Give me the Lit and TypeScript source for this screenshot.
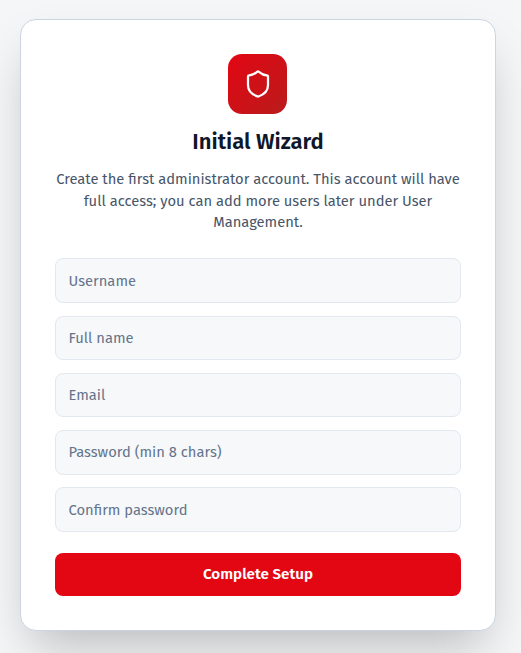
import { LitElement, html, css } from "lit";
import { customElement } from "lit/decorators.js";

@customElement("app-root")
export class AppRoot extends LitElement {
  static styles = css`
    :host { display: block; min-height: 653px; box-sizing: border-box; padding: 19px 25px 22px 20px; background: #f5f6f8; font-family: "Fira Sans", sans-serif; }
    .card { box-sizing: border-box; width: 476px; height: 612px; background: #fff; border: 1px solid #cbd5e1; border-radius: 16px; padding: 34px; box-shadow: 0 25px 50px -12px rgba(0,0,0,.25); display: flex; flex-direction: column; align-items: stretch; }
    .logo { width: 59px; height: 60px; margin-left: -1px; border-radius: 14px; background: linear-gradient(135deg, #e30613, #b91c1c); align-self: center; display: flex; align-items: center; justify-content: center; }
    h1 { margin: 14px 0 0; font-size: 22px; line-height: 28px; font-weight: 600; color: #0f172a; text-align: center; }
    p { margin: 13px 0 0; font-size: 14.72px; line-height: 21.5px; color: #475569; text-align: center; }
    form { display: flex; flex-direction: column; gap: 12.75px; margin-top: 24.75px; }
    input { box-sizing: border-box; width: 100%; height: 44.5px; border: 1px solid #e2e8f0; border-radius: 8px; background: #f7f8fa; padding: 0 12.5px; font: inherit; font-size: 14.72px; outline: none; }
    input::placeholder { color: #64748b; opacity: 1; }
    button { height: 43px; margin-top: 8.25px; border: 0; border-radius: 8px; background: #e30613; color: #fff; font: inherit; font-size: 15.2px; font-weight: 600; }
  `;
  render() {
    return html`<div class="card">
      <div class="logo"><svg width="30" height="30" viewBox="0 0 24 24" fill="none" stroke="#fff" stroke-width="1.8" stroke-linecap="round" stroke-linejoin="round"><path d="M20 13c0 5-3.5 7.5-7.66 8.95a1 1 0 0 1-.67-.01C7.5 20.5 4 18 4 13V6a1 1 0 0 1 1-1c2 0 4.5-1.2 6.24-2.72a1.17 1.17 0 0 1 1.52 0C14.51 3.81 17 5 19 5a1 1 0 0 1 1 1z"/></svg></div>
      <h1>Initial Wizard</h1>
      <p>Create the first administrator account. This account will have full access; you can add more users later under User Management.</p>
      <form>
        <input placeholder="Username" />
        <input placeholder="Full name" />
        <input placeholder="Email" />
        <input placeholder="Password (min 8 chars)" />
        <input placeholder="Confirm password" />
        <button type="button">Complete Setup</button>
      </form>
    </div>`;
  }
}
